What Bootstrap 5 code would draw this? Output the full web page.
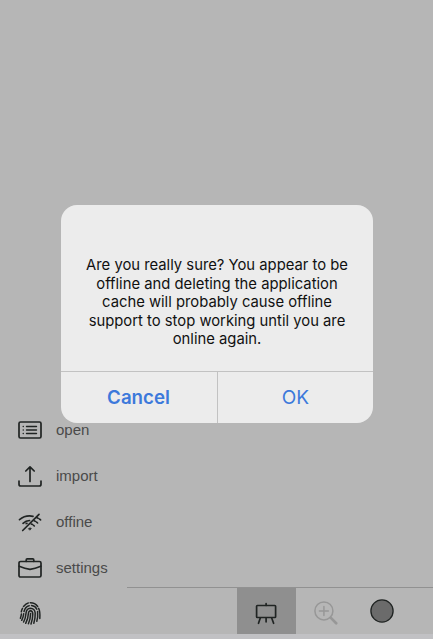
<!DOCTYPE html>
<html lang="en">
<head>
<meta charset="utf-8">
<meta name="viewport" content="width=device-width, initial-scale=1">
<title>Offline cache</title>
<link href="https://cdn.jsdelivr.net/npm/bootstrap@5.3.0/dist/css/bootstrap.min.css" rel="stylesheet">
<style>
body{background:#b6b6b6;font-family:"Liberation Sans",Arial,sans-serif;height:639px;overflow:hidden}
svg{display:block;fill:none;stroke:#202423;stroke-width:1.7;stroke-linecap:round;stroke-linejoin:round}
.menu-item{height:46px;padding-left:18px;gap:14px;font-size:15px;color:#4a4a4a;background:none;border:0;text-align:left}
.menu-list{margin-bottom:-4px}
.bottom-bar{height:47px}
.home-strip{height:5px;background:#c1c1c4}
.finger-btn{width:127px;padding:14px 0 0 19px}
.tools{border-top:1px solid #919191;padding-left:110px}
.tool{width:59px;height:46px;padding:3px 0 0}
.tool-active{background:#8f8f8f;padding-right:2px}
.tool-color{padding:0 6px 0 0}
.zoom-icon{stroke:#979797}
.alert-box{width:312px;height:218px;top:205px;left:61px;background:#ececec;border-radius:16px;font-family:Inter,sans-serif;overflow:hidden}
.alert-text{padding-top:51px;height:166px;font-size:14.8px;line-height:18.6px;color:#111}
.alert-text span{display:block;white-space:nowrap}
.alert-actions{height:52px;border-top:1px solid #c2c2c2}
.alert-actions button{background:none;border:0;padding:2px 0 0;font-size:19px;color:#3c79db}
.alert-actions button:first-child{font-size:18.7px;padding-right:1px}
.alert-actions button+button{border-left:1px solid #c2c2c2}
</style>
<script src="https://cdn.jsdelivr.net/npm/bootstrap@5.3.0/dist/js/bootstrap.bundle.min.js"></script>
</head>
<body class="d-flex flex-column justify-content-end position-relative">
<nav class="menu-list d-flex flex-column">
  <button class="menu-item d-flex align-items-center"><svg width="24" height="24" viewBox="0 0 24 24"><rect x="1" y="4" width="22" height="16" rx="1.5"/><path d="M8.500 8.500H18.500M8.500 12H18.500M8.500 15.500H18.500M5.200 8.500h.1M5.200 12h.1M5.200 15.500h.1" stroke-width="1.4"/></svg><span>open</span></button>
  <button class="menu-item d-flex align-items-center"><svg width="24" height="24" viewBox="0 0 24 24"><path d="M1 17v3.200q0 1.800 1.800 1.800h18.400q1.800 0 1.800-1.800V17M12 17.500V2.800M7.800 7L12 2.800L16.200 7"/></svg><span>import</span></button>
  <button class="menu-item d-flex align-items-center"><svg width="24" height="24" viewBox="0 0 24 24"><path d="M4.700 20.500L21 4.300M1.500 9.600Q7.500 4.800 15 6.300M5 13.300Q8 10.700 11.500 10.500"/><path d="M8.200 13.600l.8-.3M18.600 7.600l1.500.6M21.400 9l1.200.9M16.200 10.800l1.200.6M18.600 12.200l1 .8M13.300 14l1.200.5M15.600 15.400l.7.600" stroke-width="1.600"/><path d="M10.700 18.400Q12 17.400 13.300 18.400L12 19.900z" fill="#202423" stroke-width=".8"/></svg><span>offine</span></button>
  <button class="menu-item d-flex align-items-center"><svg width="24" height="24" viewBox="0 0 24 24"><rect x="1" y="5.500" width="22" height="15.500" rx="1.600"/><path d="M8.200 5.300V3.900q0-1 1-1h5.600q1 0 1 1v1.400M1.200 10.200Q7 12.600 12 13.300Q17 12.600 22.800 10.200"/></svg><span>settings</span></button>
</nav>
<footer>
  <div class="bottom-bar d-flex">
    <div class="finger-btn flex-shrink-0"><svg width="23" height="25" viewBox="0 0 23 25"><g stroke-width="1.500"><path d="M4.500 5.500Q7 2.400 9.300 2M11.200 1.700Q16 1.600 18.700 5.500M2.300 10.800Q2.600 8.900 3.500 7.400M19.600 7.300Q21.300 10.200 20.800 17.500M5 10.500Q6.200 5.500 10.200 4.700M12.500 4.600Q16.500 5 17.800 8.200M18.600 10.500Q19.100 16.500 17.800 20.200M1.400 17.200Q2.200 15 2.400 13M2.700 19.300Q4.400 16 4.700 12.800M4.600 21Q6.700 17 7.100 11.700Q7.600 7.500 11.300 7.200Q15.800 7.300 16.200 12Q16.400 17.500 14.800 22.200M6.700 22.300Q9.200 17.500 9.400 12.500Q9.600 9.800 11.500 9.700Q13.800 9.900 13.800 13Q13.700 18.500 12 23M9.400 22.800Q11.500 18 11.600 12.500"/></g></svg></div>
    <div class="tools d-flex flex-grow-1">
      <button class="tool tool-active btn rounded-0 border-0 d-flex align-items-center justify-content-center"><svg width="24" height="24" viewBox="0 0 24 24"><rect x="2.600" y="4.500" width="19" height="12" rx=".8"/><path d="M12.100 2.500v1.800M6.300 17L4.500 22.300M12.100 17v3.800M17.700 17l1.900 5.300"/></svg></button>
      <button class="tool btn rounded-0 border-0 d-flex align-items-center justify-content-center"><svg class="zoom-icon" width="24" height="24" viewBox="0 0 24 24"><circle cx="9.900" cy="9.900" r="9" stroke-width="1.500"/><path d="M9.900 5.400v9M5.400 9.900h9" stroke-width="1.500"/><path d="M16.600 16.600L22.200 22.200" stroke-width="2.700"/></svg></button>
      <button class="tool tool-color btn rounded-0 border-0 d-flex align-items-center justify-content-center"><svg width="24" height="24" viewBox="0 0 24 24"><circle cx="12" cy="12" r="11.100" fill="#6b6b6b" stroke-width="1.300"/></svg></button>
    </div>
  </div>
  <div class="home-strip"></div>
</footer>
<section class="alert-box position-absolute d-flex flex-column" role="alertdialog">
  <p class="alert-text m-0 text-center"><span>Are you really sure? You appear to be</span><span>offline and deleting the application</span><span>cache will probably cause offline</span><span>support to stop working until you are</span><span>online again.</span></p>
  <div class="alert-actions d-flex"><button class="w-50 fw-semibold">Cancel</button><button class="w-50">OK</button></div>
</section>
</body>
</html>
